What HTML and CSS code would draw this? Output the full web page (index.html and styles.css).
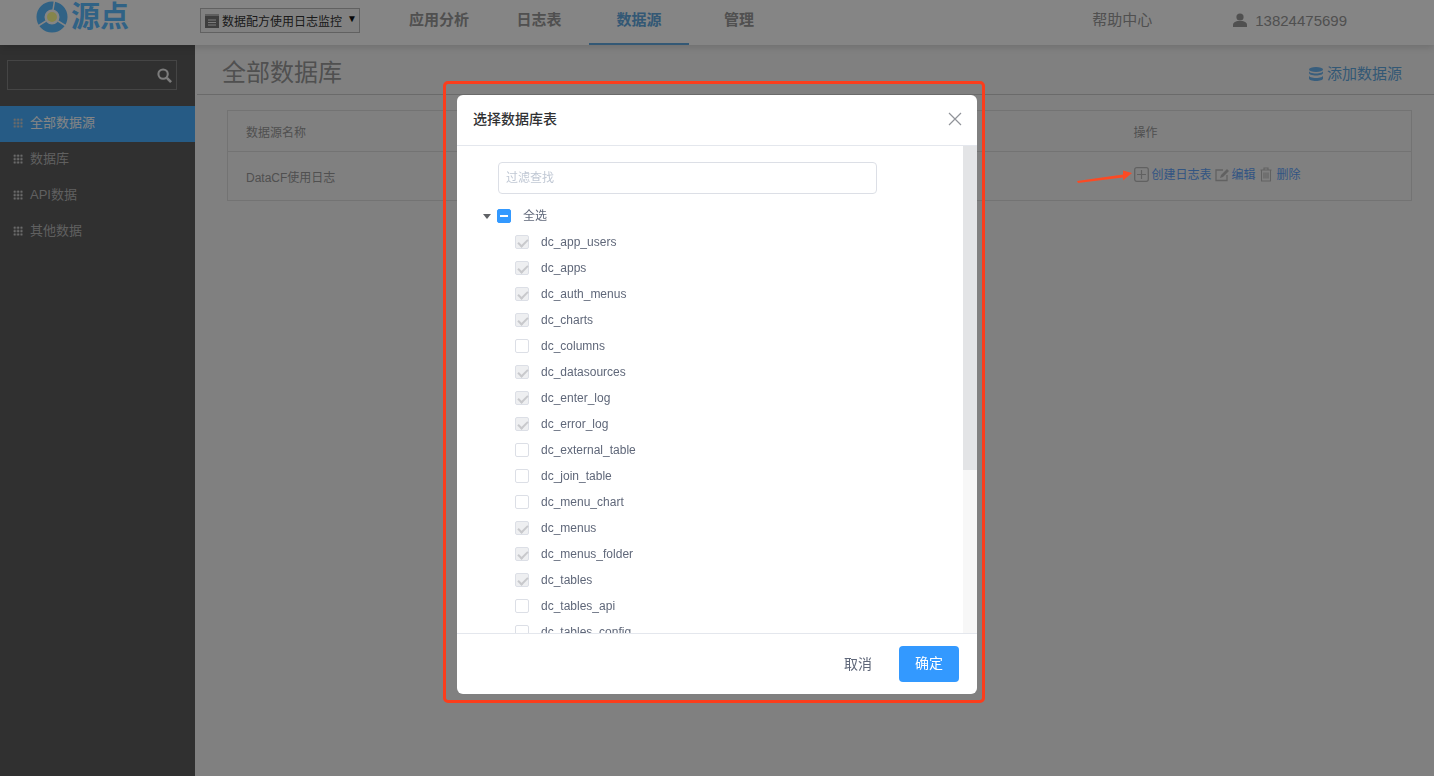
FILE: index.html

```html
<!DOCTYPE html>
<html lang="en">
<head>
    <meta charset="UTF-8">
    <title>全部数据库</title>
    <link rel="stylesheet" href="styles.css">
</head>
<body>
    <header class="topbar">
        <div class="logo">
            <svg class="logo-mark" viewBox="0 0 32 32" width="32" height="32">
                <circle cx="16" cy="16" r="11.5" fill="none" stroke="#5cbcff" stroke-width="8"/>
                <path d="M18.500 0L17 9M2 25L10 20M30 25L22 20" stroke="#fff" stroke-width="1.500"/>
                <circle cx="16" cy="16" r="5" fill="#ffff90"/>
            </svg>
            <span class="logo-text">源点</span>
        </div>
        <div class="app-select">
            <svg class="app-icon" viewBox="0 0 14 14" width="14" height="14"><path d="M0 2h14v12H0z" fill="#777"/><path d="M1 0v2M3 0v2M5 0v2M7 0v2M9 0v2M11 0v2M13 0v2" stroke="#777" stroke-width="1"/><path d="M3 6h8M3 8.500h8M3 11h8" stroke="#eee" stroke-width="1"/></svg>
            <span class="app-name">数据配方使用日志监控</span>
            <i class="select-arrow">▼</i>
        </div>
        <nav class="nav">
            <a>应用分析</a>
            <a>日志表</a>
            <a class="active">数据源</a>
            <a>管理</a>
        </nav>
        <a class="help">帮助中心</a>
        <div class="user">
            <svg viewBox="0 0 14 14" width="14" height="14"><circle cx="7" cy="4" r="3.600" fill="#999"/><path d="M0 14v-2.500C0 9.500 2.500 8.500 4.500 8h5c2 .5 4.500 1.500 4.500 3.500V14z" fill="#999"/></svg>
            <span>13824475699</span>
        </div>
    </header>

    <div class="page">
        <aside class="sidebar">
            <div class="side-search">
                <svg viewBox="0 0 16 16" width="15" height="15"><circle cx="6.500" cy="6.500" r="5" fill="none" stroke="#eee" stroke-width="2.200"/><path d="M10.500 10.500L15 15" stroke="#eee" stroke-width="2.800"/></svg>
            </div>
            <ul class="side-menu">
                <li class="active"><i class="dots"></i><span>全部数据源</span></li>
                <li><i class="dots"></i><span>数据库</span></li>
                <li><i class="dots"></i><span>API数据</span></li>
                <li><i class="dots"></i><span>其他数据</span></li>
            </ul>
        </aside>

        <main class="content">
            <div class="content-head">
                <h1>全部数据库</h1>
                <a class="add-source">
                    <svg viewBox="0 0 14 14" width="14" height="14"><ellipse cx="7" cy="2.500" rx="7" ry="2.500" fill="#6cb4f0"/><path d="M0 4v2c0 1.400 3 2.500 7 2.500S14 7.400 14 6V4c0 1.400-3 2.500-7 2.500S0 5.400 0 4zM0 8.500v3C0 12.900 3 14 7 14s7-1.100 7-2.500v-3c0 1.400-3 2.500-7 2.500S0 9.900 0 8.500z" fill="#6cb4f0"/></svg>
                    添加数据源
                </a>
            </div>
            <table class="source-table">
                <tr>
                    <th>数据源名称</th>
                    <th class="col-actions">操作</th>
                </tr>
                <tr>
                    <td>DataCF使用日志</td>
                    <td class="col-actions">
                        <div class="actions">
                            <svg viewBox="0 0 15 15" width="15" height="15"><rect x=".7" y=".7" width="13.600" height="13.600" rx="2" fill="none" stroke="#bbb" stroke-width="1.300"/><path d="M7.500 3v9M3 7.500h9" stroke="#bbb" stroke-width="1.200"/></svg>
                            <a class="act-create">创建日志表</a>
                            <svg class="act-icon" viewBox="0 0 16 15" width="16" height="15"><path d="M12 8v5.500H1V3h7" fill="none" stroke="#bbb" stroke-width="1.300"/><path d="M5 11l1-3 6-6 2 2-6 6z" fill="#bbb"/></svg>
                            <a class="act-edit">编辑</a>
                            <svg class="act-icon" viewBox="0 0 13 15" width="14" height="15"><path d="M1 3h11M4.500 3V1h4v2M2 3v11h9V3M4.500 5.500v6M6.500 5.500v6M8.500 5.500v6" fill="none" stroke="#bbb" stroke-width="1.100"/></svg>
                            <a class="act-delete">删除</a>
                        </div>
                    </td>
                </tr>
            </table>
        </main>
    </div>

    <div class="overlay">
        <div class="dialog">
            <div class="dialog-head">
                <span class="dialog-title">选择数据库表</span>
                <svg class="close" viewBox="0 0 14 14" width="14" height="14"><path d="M1 1l12 12M13 1L1 13" stroke="#909399" stroke-width="1.200"/></svg>
            </div>
            <div class="dialog-body">
                <input class="filter" type="text" placeholder="过滤查找">
                <div class="tree-root"><i class="caret"></i><i class="box mixed"></i><span>全选</span></div>
                <ul class="tree">
                    <li><i class="box checked"></i>dc_app_users</li>
                    <li><i class="box checked"></i>dc_apps</li>
                    <li><i class="box checked"></i>dc_auth_menus</li>
                    <li><i class="box checked"></i>dc_charts</li>
                    <li><i class="box"></i>dc_columns</li>
                    <li><i class="box checked"></i>dc_datasources</li>
                    <li><i class="box checked"></i>dc_enter_log</li>
                    <li><i class="box checked"></i>dc_error_log</li>
                    <li><i class="box"></i>dc_external_table</li>
                    <li><i class="box"></i>dc_join_table</li>
                    <li><i class="box"></i>dc_menu_chart</li>
                    <li><i class="box checked"></i>dc_menus</li>
                    <li><i class="box checked"></i>dc_menus_folder</li>
                    <li><i class="box checked"></i>dc_tables</li>
                    <li><i class="box"></i>dc_tables_api</li>
                    <li><i class="box"></i>dc_tables_config</li>
                </ul>
                <div class="scroll-track"><div class="scroll-thumb"></div></div>
            </div>
            <div class="dialog-foot">
                <a class="cancel">取消</a>
                <button class="confirm" type="button">确定</button>
            </div>
            <!-- red note box drawn on the screenshot -->
            <div class="note-box"></div>
        </div>
        <svg class="note-arrow" viewBox="0 0 56 16" width="56" height="16"><path d="M0 13L46 6.500V2.500L55 5 46 12.500V9.500L1 15z" fill="#fb4a24"/></svg>
    </div>
</body>
</html>
```

FILE: styles.css

```css
* {
    box-sizing: border-box;
}

body {
    margin: 0;
    height: 776px;
    overflow: hidden;
    font-family: "Liberation Sans", "Noto Sans CJK SC", sans-serif;
    background-color: #f6f6f6;
    color: #666;
}

ul {
    list-style: none;
    margin: 0;
    padding: 0;
}

/* top bar */
.topbar {
    position: relative;
    z-index: 2;
    display: flex;
    align-items: center;
    height: 45px;
    background-color: #fff;
    box-shadow: 0 2px 8px rgba(0, 0, 0, 0.15);
}

.logo {
    display: flex;
    align-items: center;
    width: 200px;
    height: 45px;
    padding: 0 0 11px 36px;
    color: #5cbcff;
}

.logo-text {
    margin-left: 3px;
    font-size: 29px;
    line-height: 32px;
    font-weight: 700;
}

.app-select {
    display: flex;
    align-items: center;
    gap: 3px;
    width: 160px;
    height: 25px;
    margin-bottom: 4px;
    padding: 0 4px;
    border: 1px solid #bbb;
    font-size: 12px;
    color: #333;
    background-color: #f8f8f8;
}

.app-icon {
    flex-shrink: 0;
}

.app-name {
    flex-shrink: 0;
    white-space: nowrap;
}

.select-arrow {
    margin: -5px 0 0 2px;
    font-style: normal;
    font-size: 10px;
    color: #111;
}

.nav {
    display: flex;
    margin-left: 29px;
}

.nav a {
    width: 100px;
    height: 45px;
    padding-bottom: 5px;
    line-height: 40px;
    text-align: center;
    font-size: 15px;
    font-weight: 700;
    color: #999;
}

.nav a.active {
    color: #62a9e0;
    border-bottom: 2px solid #62a9e0;
}

.help {
    margin-left: auto;
    margin-bottom: 9px;
    font-size: 15px;
    color: #999;
}

.user {
    display: flex;
    align-items: center;
    gap: 8px;
    margin: 0 87px 5px 81px;
    font-size: 15px;
    color: #999;
}

.page {
    display: flex;
    height: 731px;
}

/* left menu */
.sidebar {
    width: 195px;
    flex-shrink: 0;
    padding-top: 15px;
    background-color: #5c5c5c;
}

.side-search {
    display: flex;
    align-items: center;
    justify-content: flex-end;
    width: 170px;
    height: 30px;
    margin-left: 7px;
    padding-right: 4px;
    border: 1px solid #858585;
}

.side-menu {
    margin-top: 16px;
}

.side-menu li {
    display: flex;
    align-items: center;
    height: 36px;
    padding-left: 13px;
    font-size: 13px;
    color: #b8b8b8;
}

.side-menu li span {
    margin-bottom: 6px;
}

.side-menu li.active {
    background-color: #49afff;
    color: #fff;
}

.dots {
    width: 10px;
    height: 10px;
    margin: -2px 7px 0 0;
    background-image: radial-gradient(circle, #ccc 1.2px, transparent 1.4px);
    background-size: 3.400px 3.400px;
}

/* main area */
.content {
    flex: 1;
    padding-left: 2px;
}

.content-head {
    display: flex;
    align-items: center;
    justify-content: space-between;
    height: 50px;
    padding: 0 32px 0 25px;
    border-bottom: 1px solid #ccc;
}

.content-head h1 {
    margin: 2px 0 0;
    font-size: 24px;
    font-weight: 400;
    color: #999;
}

.add-source {
    display: flex;
    align-items: center;
    gap: 4px;
    margin-top: 5px;
    font-size: 15px;
    color: #62a9e0;
}

.add-source svg {
    margin-top: 4px;
}

.source-table {
    width: 1185px;
    margin: 15px 0 0 30px;
    border: 1px solid #ddd;
    border-collapse: collapse;
    font-size: 12px;
    color: #999;
}

.source-table th,
.source-table td {
    padding: 0 0 0 18px;
    text-align: left;
    font-weight: 400;
}

.source-table th {
    height: 41px;
    border-bottom: 1px solid #ddd;
}

.source-table td {
    height: 49px;
}

.source-table .col-actions {
    width: 296px;
    padding-left: 18px;
}

.actions {
    display: flex;
    align-items: center;
    margin-bottom: 4px;
}

.actions a {
    color: #60a3fa;
    margin-bottom: 1px;
}

.act-create {
    margin: 0 3px;
}

.act-edit {
    margin: 0 3px 0 1px;
}

.act-delete {
    margin-left: 4px;
}

/* dialog */
.overlay {
    position: fixed;
    top: 0;
    left: 0;
    z-index: 5;
    display: flex;
    justify-content: center;
    align-items: flex-start;
    width: 100%;
    height: 100%;
    background-color: rgba(0, 0, 0, 0.48);
}

.dialog {
    position: relative;
    display: flex;
    flex-direction: column;
    width: 520px;
    height: 599px;
    margin-top: 95px;
    border-radius: 6px;
    background-color: #fff;
}

.dialog-head {
    display: flex;
    align-items: center;
    justify-content: space-between;
    flex-shrink: 0;
    height: 51px;
    padding: 0 15px 2px 16px;
    border-bottom: 1px solid #e4e7ed;
    font-size: 14px;
    font-weight: 500;
    color: #303133;
}

.dialog-title {
    margin-bottom: 2px;
}

.dialog-body {
    position: relative;
    flex: 1;
    overflow: hidden;
    padding: 16px 0 0 25px;
    font-size: 12px;
    color: #5f6779;
}

/* the list's scrollbar, headless browser hides the real one */
.scroll-track {
    position: absolute;
    top: 0;
    right: 0;
    width: 14px;
    height: 100%;
    background-color: #f7f7f7;
}

.scroll-thumb {
    height: 324px;
    background-color: #e3e4e6;
}

.filter {
    display: block;
    width: 379px;
    height: 32px;
    margin-left: 16px;
    padding: 0 7px;
    border: 1px solid #dcdfe6;
    border-radius: 4px;
    font-family: inherit;
    font-size: 12px;
    outline: none;
}

.filter::placeholder {
    color: #c0c8d4;
}

.tree-root {
    display: flex;
    align-items: center;
    height: 26px;
    margin-top: 9px;
}

.tree-root span {
    margin: 0 0 3px 12px;
}

.caret {
    width: 0;
    height: 0;
    margin: 0 6px 0 1px;
    border-style: solid;
    border-width: 5px 4.500px 0;
    border-color: #606266 transparent transparent;
}

.tree li {
    display: flex;
    align-items: center;
    gap: 12px;
    height: 26px;
    padding-left: 33px;
}

.box {
    position: relative;
    flex-shrink: 0;
    width: 14px;
    height: 14px;
    border: 1px solid #dcdfe6;
    border-radius: 2px;
    background-color: #fff;
}

.box.checked {
    background-color: #eeeff1;
}

.box.checked::after {
    content: "";
    position: absolute;
    top: 1px;
    left: 4px;
    width: 4px;
    height: 8px;
    border: solid #c8c9cc;
    border-width: 0 2px 2px 0;
    transform: rotate(45deg);
}

.box.mixed {
    border-color: #39f;
    background-color: #39f;
}

.box.mixed::after {
    content: "";
    position: absolute;
    top: 5px;
    left: 2px;
    width: 8px;
    height: 2px;
    background-color: #fff;
}

.dialog-foot {
    display: flex;
    align-items: center;
    justify-content: flex-end;
    flex-shrink: 0;
    height: 61px;
    padding: 0 18px 0 0;
    border-top: 1px solid #e4e7ed;
}

.cancel {
    margin: 0 27px 3px 0;
    font-size: 14px;
    color: #5f6779;
}

.confirm {
    width: 60px;
    height: 36px;
    padding: 0 0 4px;
    border: none;
    border-radius: 4px;
    background-color: #39f;
    color: #fff;
    font-family: inherit;
    font-size: 14px;
}

/* notes on top of the screenshot */
.note-box {
    position: absolute;
    top: -14px;
    left: -14px;
    right: -8px;
    bottom: -9px;
    border: 3px solid #fb3d1c;
    border-radius: 5px;
}

.note-arrow {
    position: absolute;
    top: 168px;
    left: 1077px;
}
```
